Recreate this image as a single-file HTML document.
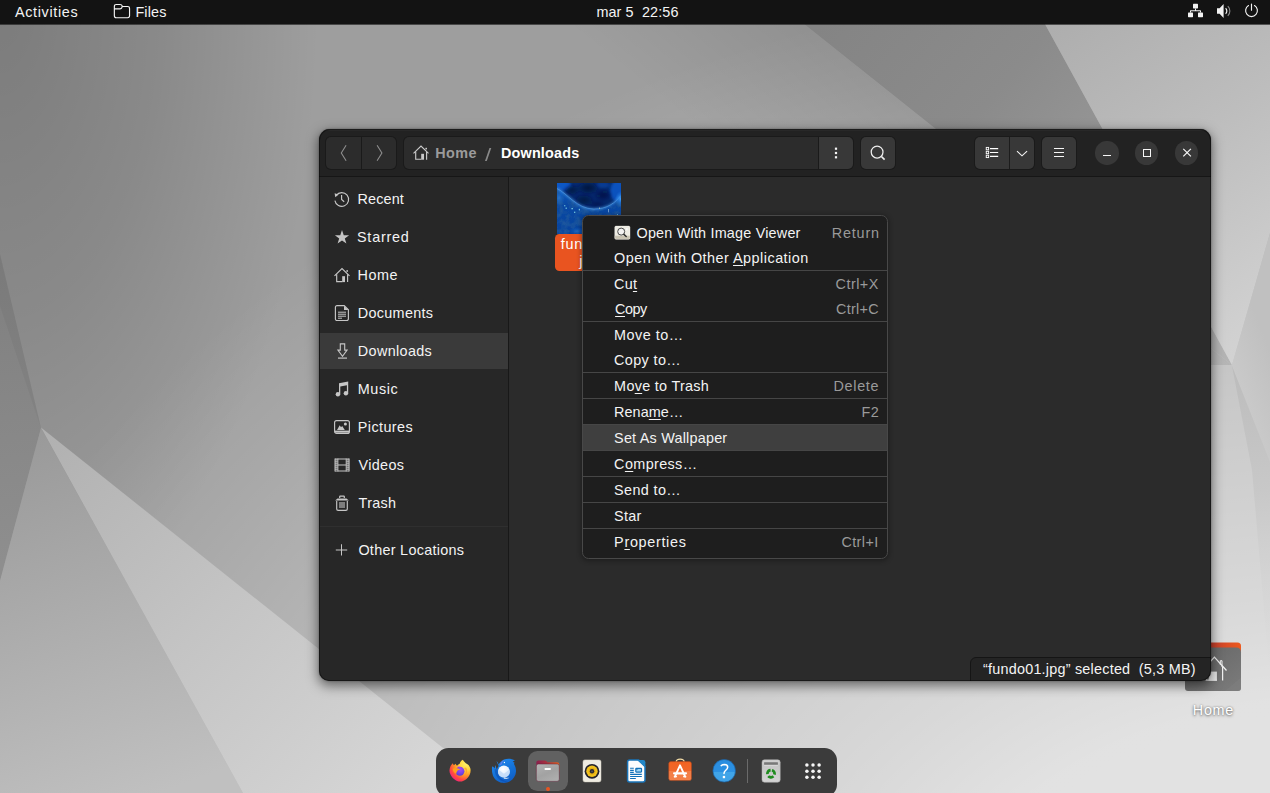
<!DOCTYPE html>
<html lang="en">
<head>
<meta charset="utf-8">
<title>Files - Downloads</title>
<style>
*{box-sizing:border-box;margin:0;padding:0}
html,body{width:1270px;height:793px;overflow:hidden;background:#9a9a9a}
body{position:relative;font-family:"Liberation Sans","DejaVu Sans",sans-serif;font-size:14.4px;color:#f2f2f2;-webkit-font-smoothing:antialiased}
.abs{position:absolute}
svg{display:block;position:absolute;overflow:visible}
#wall{left:0;top:0;width:1270px;height:793px}
/* top bar */
#topbar{left:0;top:0;width:1270px;height:24px;background:#131313;box-shadow:0 1px 0 rgba(19,19,19,.62)}
.tb{position:absolute;top:0;height:24px;line-height:22px;white-space:nowrap;color:#f4f4f4;font-size:14.4px}
/* window */
#winshadow{left:319px;top:129px;width:892px;height:552px;border-radius:11px 11px 10px 10px;box-shadow:0 4px 12px 1px rgba(0,0,0,.5),0 0 2px 0 rgba(0,0,0,.35)}
#win{left:319px;top:129px;width:892px;height:552px;border-radius:11px 11px 10px 10px;overflow:hidden;background:#2b2b2b}
#header{left:0;top:0;width:892px;height:47px;background:#222222;box-shadow:inset 0 2px 0 -0.5px #2f2f2f}
#hline{left:0;top:47px;width:892px;height:1px;background:#161616}
.hbtn{position:absolute;top:7.7px;height:32.5px;background:#2c2c2c;box-shadow:0 0 0 1px #1a1a1a;border-radius:5px}
.hbtn.l{background:#383838}
.circ{position:absolute;width:23.4px;height:23.4px;border-radius:50%;background:#383838;top:12.4px}
#sidebar{left:0;top:48px;width:189px;height:504px;background:#272727}
#sideline{left:189px;top:48px;width:1px;height:504px;background:#181818}
.row{position:absolute;left:1px;width:188px;height:36px}
.row.sel{background:#3a3a3a}
.row span{position:absolute;left:38.4px;top:7px;line-height:22px;white-space:nowrap;color:#f3f3f3}
.row svg{left:14px;top:10px;width:16px;height:16px}
.mi{line-height:22px;white-space:nowrap;color:#f3f3f3}
.ms{line-height:22px;white-space:nowrap;color:#9a9a9a}
u{text-decoration:underline;text-decoration-thickness:1px;text-underline-offset:2px}
</style>
</head>
<body>
<svg id="wall" viewBox="0 0 1270 793" width="1270" height="793">
<defs>
<radialGradient id="gAL" gradientUnits="userSpaceOnUse" cx="1350" cy="1000" r="1480" gradientTransform="translate(1350 1000) scale(1 .7071) translate(-1350 -1000)">
<stop offset="0" stop-color="#fff" stop-opacity=".72"/><stop offset=".29" stop-color="#fff" stop-opacity=".70"/><stop offset=".39" stop-color="#fff" stop-opacity=".60"/><stop offset=".57" stop-color="#fff" stop-opacity=".45"/><stop offset=".69" stop-color="#fff" stop-opacity=".34"/><stop offset=".91" stop-color="#fff" stop-opacity=".09"/><stop offset="1" stop-color="#fff" stop-opacity="0"/>
</radialGradient>
<radialGradient id="gAD" gradientUnits="userSpaceOnUse" cx="0" cy="0" r="640" gradientTransform="scale(.5 1)">
<stop offset="0" stop-color="#000" stop-opacity=".22"/><stop offset=".5" stop-color="#000" stop-opacity=".13"/><stop offset="1" stop-color="#000" stop-opacity="0"/>
</radialGradient>
<linearGradient id="gEd" gradientUnits="userSpaceOnUse" x1="806.5" y1="217.8" x2="900" y2="100.5"><stop offset="0" stop-color="#000" stop-opacity="0"/><stop offset="1" stop-color="#000" stop-opacity=".085"/></linearGradient>
<linearGradient id="gDark" gradientUnits="userSpaceOnUse" x1="820" y1="24" x2="1200" y2="360">
<stop offset="0" stop-color="#848484"/><stop offset=".35" stop-color="#8b8b8b"/><stop offset=".8" stop-color="#a0a0a0"/><stop offset="1" stop-color="#b4b4b4"/>
</linearGradient>
<linearGradient id="gTR" gradientUnits="userSpaceOnUse" x1="1060" y1="24" x2="1270" y2="330">
<stop offset="0" stop-color="#aeaeae"/><stop offset=".45" stop-color="#bdbdbd"/><stop offset="1" stop-color="#d2d2d2"/>
</linearGradient>
<linearGradient id="gR" gradientUnits="userSpaceOnUse" x1="1232" y1="365" x2="1270" y2="350">
<stop offset="0" stop-color="#c9c9c9"/><stop offset="1" stop-color="#c0c0c0"/>
</linearGradient>
<linearGradient id="gRB" gradientUnits="userSpaceOnUse" x1="1240" y1="366" x2="1262" y2="680">
<stop offset="0" stop-color="#bcbcbc"/><stop offset=".4" stop-color="#c8c8c8"/><stop offset="1" stop-color="#dcdcdc" stop-opacity="0"/></linearGradient>
<linearGradient id="gLW" gradientUnits="userSpaceOnUse" x1="0" y1="254" x2="30" y2="560">
<stop offset="0" stop-color="#7f7f7f"/><stop offset="1" stop-color="#8e8e8e"/>
</linearGradient>
<linearGradient id="gC" gradientUnits="userSpaceOnUse" x1="30" y1="440" x2="160" y2="793">
<stop offset="0" stop-color="#9a9a9a"/><stop offset=".5" stop-color="#adadad"/><stop offset="1" stop-color="#c0c0c0"/>
</linearGradient>
<linearGradient id="gB" gradientUnits="userSpaceOnUse" x1="41" y1="428" x2="400" y2="793">
<stop offset="0" stop-color="#b0b0b0"/><stop offset=".5" stop-color="#c4c4c4"/><stop offset="1" stop-color="#d6d6d6"/>
</linearGradient>
</defs>
<rect x="0" y="0" width="1270" height="793" fill="#9e9e9e"/><rect x="0" y="0" width="1270" height="793" fill="url(#gAL)"/><rect x="0" y="0" width="1270" height="793" fill="url(#gAD)"/>
<polygon points="560,24 804,24 1232,365 988,365" fill="url(#gEd)"/><polygon points="804,24 1045,24 1232,365" fill="url(#gDark)"/>
<polygon points="1045,24 1270,24 1270,233 1232,365" fill="url(#gTR)"/>
<polygon points="1270,233 1232,365 1270,473" fill="url(#gR)"/>
<polygon points="1232,366 1270,462 1270,680 1252,470" fill="url(#gRB)"/>
<polygon points="0,254 41,428 0,581" fill="url(#gLW)"/><polygon points="0,254 41,428 0,306" fill="#000" fill-opacity=".035"/>
<polygon points="0,581 41,428 243,793 0,793" fill="url(#gC)"/>
<polygon points="41,427.5 499.5,793 243,793" fill="url(#gB)"/>
</svg>

<!-- desktop home folder -->
<svg id="deskicon" style="left:1185px;top:642px;width:57px;height:51px" viewBox="0.000 -0.500 57.000 51.000">
<defs>
<linearGradient id="dh1" x1="0" y1="0" x2="1" y2="0"><stop offset="0" stop-color="#8e2a3c"/><stop offset=".5" stop-color="#c8412c"/><stop offset="1" stop-color="#ee5a1e"/></linearGradient>
<linearGradient id="dh2" x1="0" y1="0" x2="1" y2="1"><stop offset="0" stop-color="#636363"/><stop offset=".6" stop-color="#727272"/><stop offset="1" stop-color="#7c7c7c"/></linearGradient>
</defs>
<path d="M0 3.500Q0 0 3.500 0H52.500Q56 0 56 3.500V12H0z" fill="url(#dh1)"/>
<path d="M0 6.500Q0 5 1.500 5H51Q56 5 56 10V45.500Q56 48.500 53 48.500H3Q0 48.500 0 45.500z" fill="url(#dh2)"/>
<path d="M56 35V45.500Q56 48.500 53 48.500H40z" fill="#808080" opacity=".55"/>
<g fill="none" stroke="#f2f2f2" stroke-width="1.250"><path d="M17.300 28 29.400 14.600 41.500 28"/><path d="M37.600 24v14"/><path d="M37 24.500v-6.300h-1.700v4.200" stroke-width="1"/><path d="M21.200 24v13.600h10.700"/></g>
<rect x="23.700" y="29.100" width="8.200" height="9" fill="#ececec"/>
</svg>
<span class="abs" id="dlabel" style="line-height:22px;left:1192.80px;top:699px;font-size:14.4px;color:#fff;white-space:nowrap;text-shadow:0 1px 3px rgba(0,0,0,.5),0 0 2px rgba(0,0,0,.35);letter-spacing:0.700px">Home</span>
<div id="topbar" class="abs">
<span class="tb" id="t_act" style="left:15.00px;letter-spacing:0.644px;margin-top:1.01px">Activities</span>
<svg style="left:113px;top:3px;width:19px;height:17px" viewBox="-0.300 -0.400 19.000 17.000"><path d="M1.050 3Q1.050 1.050 3 1.050H6.800Q8.500 1.050 8.750 2.300L8.900 3.100H14.300Q16.250 3.100 16.250 5V12.400Q16.250 14.300 14.300 14.300H3Q1.050 14.300 1.050 12.400ZM1.050 5.500H6.500Q8.500 5.500 8.900 3.100" fill="none" stroke="#f4f4f4" stroke-width="1.150" stroke-linejoin="round"/></svg>
<span class="tb" id="t_files" style="left:135.40px;letter-spacing:0.150px;margin-top:1.01px">Files</span>
<span class="tb" id="t_clock" style="left:596.40px;letter-spacing:0.110px;margin-top:1.01px">mar 5&nbsp;&nbsp;22:56</span>
<!-- network -->
<svg style="left:1187px;top:3px;width:18px;height:16px" viewBox="0.000 0.000 18.000 16.000" fill="#f2f2f2"><rect x="6" y="0.8" width="5" height="4.6" rx=".6"/><rect x="1" y="9.6" width="5" height="4.6" rx=".6"/><rect x="11" y="9.6" width="5" height="4.6" rx=".6"/><path d="M8 5.4h1v1.9h4.5a.5.5 0 0 1 .5.5v1.8h-1V8.3H4v1.3H3V7.8a.5.5 0 0 1 .5-.5H8z"/></svg>
<!-- volume -->
<svg style="left:1216px;top:3px;width:17px;height:17px" viewBox="0.000 0.000 17.000 17.000"><path d="M1 5.3h2.6L7.6 1v14L3.6 10.7H1z" fill="#f2f2f2"/><path d="M9.6 5.3a3.6 3.6 0 0 1 0 5.4" fill="none" stroke="#f2f2f2" stroke-width="1.2"/><path d="M11.8 3.2a6.6 6.6 0 0 1 0 9.6" fill="none" stroke="#8c8c8c" stroke-width="1.1"/></svg>
<!-- power -->
<svg style="left:1244px;top:3px;width:16px;height:16px" viewBox="0.000 0.000 16.000 16.000" fill="none" stroke="#f2f2f2" stroke-width="1.15" stroke-linecap="round"><path d="M7.5 1v6.2"/><path d="M4.5 2.6a5.9 5.9 0 1 0 6 0"/></svg>
</div>

<div id="winshadow" class="abs"></div>
<div id="win" class="abs">
<div id="header" class="abs"></div>
<div id="hline" class="abs"></div>
<!-- nav buttons -->
<div class="hbtn" style="left:7.4px;width:69.8px"></div>
<div class="abs" style="left:42px;top:7.7px;width:1px;height:32.5px;background:#1a1a1a"></div>
<svg style="left:17px;top:15px;width:17px;height:19px" viewBox="0.000 0.000 17.000 19.000"><path d="M10.1 1.3 5.3 9l4.8 7.7" fill="none" stroke="#8e8e8e" stroke-width="1.1"/></svg>
<svg style="left:52px;top:15px;width:18px;height:19px" viewBox="-0.800 0.000 18.000 19.000"><path d="M5.3 1.3 10.1 9l-4.8 7.7" fill="none" stroke="#8e8e8e" stroke-width="1.1"/></svg>
<!-- path bar -->
<div class="hbtn" style="left:84.7px;width:414.4px;border-radius:5px 0 0 5px"></div>
<div class="hbtn l" style="left:500px;width:34.2px;border-radius:0 5px 5px 0"></div>
<svg style="left:94px;top:15px;width:17px;height:18px" viewBox="0.000 -0.600 17.000 18.000" fill="none" stroke="#c9c9c9" stroke-width="1.150"><path d="M.5 8.800 8 1.500l7.500 7.300"/><path d="M2.700 7.200v7.400h5.600"/><path d="M13.600 7.200v7.900"/><rect x="8.200" y="9.200" width="2.800" height="5.900" fill="#c9c9c9" stroke="none"/><rect x="12.400" y="3.200" width="1.600" height="1.600" fill="#c9c9c9" stroke="none"/></svg>
<span class="abs b" id="p_home" style="left:116.30px;top:13.01px;line-height:22px;color:#9b9b9b;font-weight:bold;white-space:nowrap;letter-spacing:0.4px">Home</span>
<span class="abs" id="p_slash" style="left:166.2px;top:15px;line-height:22px;color:#8a8a8a;white-space:nowrap;font-size:19px;transform:scaleX(1.18);transform-origin:0 0">/</span>
<span class="abs b" id="p_dl" style="left:182.00px;top:13.01px;line-height:22px;color:#ffffff;font-weight:bold;white-space:nowrap;letter-spacing:0.173px">Downloads</span>
<svg style="left:514px;top:17px;width:7px;height:15px" viewBox="0.000 0.000 7.000 15.000" fill="#f4f4f4"><rect x="1.9" y="1.6" width="2.2" height="2.2"/><rect x="1.9" y="5.9" width="2.2" height="2.2"/><rect x="1.9" y="10.2" width="2.2" height="2.2"/></svg>
<!-- search -->
<div class="hbtn l" style="left:541.9px;width:34.2px"></div>
<svg style="left:549px;top:14px;width:21px;height:21px" viewBox="0.000 0.000 21.000 21.000" fill="none" stroke="#eeeeee"><circle cx="9.1" cy="9.1" r="5.9" stroke-width="1.25"/><path d="M13.4 13.5 16.6 16.6" stroke-width="1.7"/></svg>
<!-- view buttons -->
<div class="hbtn l" style="left:655.8px;width:59.3px"></div>
<div class="abs" style="left:690px;top:7.7px;width:1px;height:32.5px;background:#1c1c1c"></div>
<svg style="left:666px;top:17px;width:15px;height:14px" viewBox="0.000 0.000 15.000 14.000" fill="none" stroke="#ffffff"><rect x="1.25" y="1.4" width="2.4" height="2.4" stroke-width=".9"/><rect x="1.25" y="5.3" width="2.4" height="2.4" stroke-width=".9"/><rect x="1.25" y="9.2" width="2.4" height="2.4" stroke-width=".9"/><path d="M5 2.6h8.200M5 6.5h8.200M5 10.4h8.200" stroke-width="1.100"/></svg>
<svg style="left:696px;top:19px;width:15px;height:11px" viewBox="0.000 0.000 15.000 11.000"><path d="M2 3.100 7 7.800 12.100 3.100" fill="none" stroke="#f4f4f4" stroke-width="1.150"/></svg>
<div class="hbtn l" style="left:722.9px;width:34.4px"></div>
<div class="abs" style="left:734.7px;top:19px;width:10.4px;height:1px;background:#f6f6f6;box-shadow:0 4px 0 #f6f6f6,0 8px 0 #f6f6f6"></div>
<!-- window controls -->
<div class="circ" style="left:776.3px"></div>
<div class="circ" style="left:816px"></div>
<div class="circ" style="left:856.1px"></div>
<div class="abs" style="left:783.9px;top:26px;width:8.2px;height:1.1px;background:#f6f6f6"></div>
<div class="abs" style="left:823.6px;top:19.7px;width:8.5px;height:8.3px;border:1.2px solid #f6f6f6"></div>
<svg style="left:863px;top:19px;width:11px;height:11px" viewBox="-0.600 -0.100 11.000 11.000"><path d="M.7.7l7.6 7.6M8.3.7.7 8.3" stroke="#f6f6f6" stroke-width="1.2"/></svg>
<div id="sidebar" class="abs"></div>
<div id="sideline" class="abs"></div>
<div class="row" style="top:52px"><svg viewBox="0 0 16 16" fill="none" stroke="#c6c6c6" stroke-width="1.15"><path d="M2.2 4.3A6.9 6.9 0 1 1 .9 9.6"/><path d="M.6 2.3 4.6 3.6 1.3 6.3z" fill="#c6c6c6" stroke="none"/><path d="M7.6 4v4.5l2.6 2.2"/></svg><span id="s1" style="letter-spacing:0.120px;margin-left:-0.80px;margin-top:0.00px">Recent</span></div>
<div class="row" style="top:90px"><svg viewBox="0 0 16 16"><path d="M8 1.1 9.75 6.2 15.1 6.3 10.8 9.5 12.4 14.6 8 11.5 3.6 14.6 5.2 9.5 .9 6.3 6.25 6.2z" fill="#c4c4c4"/></svg><span id="s2" style="letter-spacing:0.767px;margin-left:-1.40px;margin-top:0.01px">Starred</span></div>
<div class="row" style="top:128px"><svg viewBox="0 0 16 16" fill="none" stroke="#c6c6c6" stroke-width="1.15"><path d="M.5 8.8 8 1.5l7.5 7.3"/><path d="M2.7 7.2v7.4h5.6"/><path d="M13.6 7.2v7.9"/><rect x="8.2" y="9.2" width="2.8" height="5.9" fill="#c6c6c6" stroke="none"/><rect x="12.4" y="3.2" width="1.6" height="1.6" fill="#c6c6c6" stroke="none"/></svg><span id="s3" style="letter-spacing:0.533px;margin-left:-0.80px;margin-top:0.00px">Home</span></div>
<div class="row" style="top:166px"><svg viewBox="0 0 16 16" fill="none" stroke="#c6c6c6" stroke-width="1.15"><path d="M3 .6h7.2l4.2 4.2v9.1a1.6 1.6 0 0 1-1.6 1.6H3a1.6 1.6 0 0 1-1.6-1.6V2.2A1.6 1.6 0 0 1 3 .6z"/><path d="M10 .8v4.3h4.3z" fill="#c6c6c6" stroke="none"/><path d="M4 7.2h8M4 9.2h8M4 11.2h8M4 13.2h4" stroke-width="1"/></svg><span id="s4" style="letter-spacing:0.300px;margin-left:-0.60px;margin-top:0.00px">Documents</span></div>
<div class="row sel" style="top:204px"><svg viewBox="0 0 16 16" fill="none" stroke="#c6c6c6" stroke-width="1.1"><path d="M6.3.9h4.4v6.2h2.4L8.5 13.4 3.9 7.1h2.4z"/><path d="M4 15.1h9" stroke-width="1.2"/></svg><span id="s5" style="letter-spacing:0.348px;margin-left:-0.60px;margin-top:0.01px">Downloads</span></div>
<div class="row" style="top:242px"><svg viewBox="0 0 16 16" fill="#c6c6c6"><path d="M5 2.2 14.2.5v11.9h-1.3V4.2L6.3 5.5v8H5z"/><circle cx="3.9" cy="13.3" r="2.2"/><circle cx="11.9" cy="12.3" r="2.2"/></svg><span id="s6" style="letter-spacing:0.550px;margin-left:-0.60px;margin-top:0.00px">Music</span></div>
<div class="row" style="top:280px"><svg viewBox="0 0 16 16" fill="none" stroke="#c6c6c6" stroke-width="1.15"><rect x=".6" y="1.6" width="14.8" height="12.8" rx="2"/><path d="M1 12.6h14" stroke-width="2"/><path d="M3 11 5.7 6.2 7 8.3 8.2 7 10.8 11z" fill="#c6c6c6" stroke="none"/><circle cx="11.4" cy="5" r="1.5" fill="#c6c6c6" stroke="none"/></svg><span id="s7" style="letter-spacing:0.400px;margin-left:-0.60px;margin-top:0.00px">Pictures</span></div>
<div class="row" style="top:318px"><svg viewBox="0 0 16 16" fill="none" stroke="#c6c6c6"><path d="M2.4 1.5v13M13.7 1.5v13" stroke-width="2.8" stroke-dasharray="1.2 .8" stroke="#c6c6c6"/><path d="M1 1.5v13M15.1 1.5v13" stroke-width="1"/><path d="M3.8 2h8.5M3.8 8h8.5M3.8 14h8.5" stroke-width="1.15"/><path d="M3.9 1.5v13M12.2 1.5v13" stroke-width=".9"/></svg><span id="s8" style="letter-spacing:0.320px;margin-left:0.20px;margin-top:0.01px">Videos</span></div>
<div class="row" style="top:356px"><svg viewBox="0 0 16 16" fill="none" stroke="#c6c6c6" stroke-width="1.15"><path d="M5.7 3V1.6a.5.5 0 0 1 .5-.5h3.6a.5.5 0 0 1 .5.5V3" stroke-width="1.2"/><path d="M1.2 5.6 3.5 3.4h9l2.3 2.2z" fill="#c6c6c6" stroke="none"/><path d="M2.7 6v8a1.4 1.4 0 0 0 1.4 1.4h7.8A1.4 1.4 0 0 0 13.300 14V6"/><path d="M6 7v6M8 7v6M10 7v6" stroke-width="1.1"/></svg><span id="s9" style="letter-spacing:0.300px;margin-left:0.20px;margin-top:0.00px">Trash</span></div>
<div class="abs" style="left:1px;top:396.5px;width:188px;height:1px;background:#2f2f2f"></div>
<div class="row" style="top:403px"><svg viewBox="0 0 16 16" stroke="#c6c6c6" stroke-width="1.05"><path d="M7.500 2.200v11.400M1.800 7.900h11.400"/></svg><span id="s10" style="letter-spacing:0.285px;margin-left:0.00px;margin-top:0.01px">Other Locations</span></div>

<!-- thumbnail -->
<svg style="left:238px;top:54px;width:65px;height:52px" viewBox="0 0 65 52">
<defs>
<linearGradient id="th1" x1="0" y1="0" x2="0" y2="1"><stop offset="0" stop-color="#042a70"/><stop offset=".5" stop-color="#04276a"/><stop offset="1" stop-color="#0a4aa6"/></linearGradient>
<radialGradient id="thd" cx=".5" cy=".5" r=".5"><stop offset="0" stop-color="#000a2c" stop-opacity=".8"/><stop offset=".5" stop-color="#01113c" stop-opacity=".55"/><stop offset="1" stop-color="#021548" stop-opacity="0"/></radialGradient>
<radialGradient id="thg" cx=".5" cy=".5" r=".5"><stop offset="0" stop-color="#4aa8ff" stop-opacity=".95"/><stop offset=".5" stop-color="#2a86ea" stop-opacity=".5"/><stop offset="1" stop-color="#2a86ea" stop-opacity="0"/></radialGradient>
<linearGradient id="th4" x1="0" y1="0" x2="0" y2="1"><stop offset="0" stop-color="#0f5cc0"/><stop offset=".35" stop-color="#0948a4"/><stop offset="1" stop-color="#08439c"/></linearGradient>
<filter id="thb" x="-30%" y="-30%" width="160%" height="160%"><feGaussianBlur stdDeviation="1.600"/></filter>
<filter id="thb2" x="-30%" y="-30%" width="160%" height="160%"><feGaussianBlur stdDeviation=".8"/></filter>
<filter id="thn" x="0" y="0" width="100%" height="100%"><feTurbulence type="fractalNoise" baseFrequency=".16" numOctaves="3" seed="7" result="n"/><feColorMatrix in="n" type="matrix" values="0 0 0 0 .01  0 0 0 0 .09  0 0 0 0 .34  0 0 0 3.200 -1.250"/><feComposite operator="in" in2="SourceGraphic"/></filter>
<clipPath id="thc"><rect width="64" height="51"/></clipPath>
</defs>
<g clip-path="url(#thc)">
<rect width="64" height="51" fill="url(#th1)"/>
<ellipse cx="3" cy="2" rx="11" ry="6" fill="#0b5cd0" opacity=".9" filter="url(#thb)"/>
<ellipse cx="61" cy="8" rx="8" ry="11" fill="#0a5acc" opacity=".85" filter="url(#thb)"/>
<ellipse cx="46" cy="2" rx="7" ry="3" fill="#0a50b8" opacity=".5" filter="url(#thb)"/>
<g filter="url(#thb2)"><ellipse cx="31" cy="5" rx="12" ry="7" fill="url(#thd)"/><ellipse cx="15" cy="7" rx="9" ry="6" fill="url(#thd)" opacity=".8"/><ellipse cx="46" cy="12" rx="10" ry="7" fill="url(#thd)" opacity=".7"/><ellipse cx="27" cy="17" rx="11" ry="7" fill="url(#thd)" opacity=".8"/><ellipse cx="40" cy="21" rx="9" ry="4.500" fill="url(#thd)" opacity=".5"/></g>
<path d="M0 5.500C10 10 20 26 37 26C50 26 58 20 64 12.500V51H0z" fill="url(#th4)"/>
<path d="M0 5.500C10 10 20 26 37 26C50 26 58 20 64 12.500V51H0z" fill="#021a58" filter="url(#thn)"/>
<path d="M0 5.500C10 10 20 26 37 26C50 26 58 20 64 12.500" fill="none" stroke="#4c9ff0" stroke-width="2" opacity=".6" filter="url(#thb2)"/>
<path d="M0 5.500C10 10 20 26 37 26C50 26 58 20 64 12.500" fill="none" stroke="#6ab4f8" stroke-width=".6" opacity=".75"/>
<ellipse cx="64" cy="16" rx="6" ry="8" fill="url(#thg)"/>
<ellipse cx="2" cy="15" rx="6" ry="8" fill="url(#thg)" opacity=".4"/>
<ellipse cx="20" cy="48" rx="8" ry="4" fill="url(#thg)" opacity=".35"/>
<g fill="#8fe6ee" opacity=".9"><rect x="7.200" y="22.200" width="1.100" height="1.100"/><rect x="8.600" y="24.600" width="1.200" height="1.200"/><rect x="14.500" y="25" width="1.300" height="1.300"/><rect x="21.800" y="25.800" width="1" height="1.600"/><rect x="17" y="28.700" width="1.300" height="1.100"/><rect x="42" y="24.600" width=".8" height="1.100" fill="#cfe8c8"/><rect x="51" y="26" width=".8" height="3.300" fill="#c6e4f4" opacity=".7"/><rect x="60" y="31" width=".8" height=".8"/></g>
</g>
</svg>
<div class="abs" style="left:236.300px;top:105px;width:70px;height:37px;background:#e95420;border-radius:4.500px"></div>
<span class="abs" id="f1" style="left:241.7px;top:106px;line-height:18px;white-space:nowrap;color:#fff;letter-spacing:0.75px">fundo01.</span>
<span class="abs" id="f2" style="left:260.2px;top:123px;line-height:18px;white-space:nowrap;color:#fff;letter-spacing:0.3px">jpg</span>
<!-- status bar -->
<div class="abs" style="left:651.300px;top:528.300px;width:245px;height:30px;background:#242424;border:1px solid #151515;border-radius:6px 0 0 0"></div>
<span class="abs" id="st" style="left:664.00px;top:529.01px;line-height:22px;white-space:nowrap;color:#f4f4f4;letter-spacing:0.225px">“fundo01.jpg” selected&nbsp;&nbsp;(5,3 MB)</span>

<div class="abs" style="left:0;top:0;width:892px;height:552px;border-radius:11px 11px 10px 10px;box-shadow:inset 0 0 0 1px rgba(0,0,0,.42);pointer-events:none"></div>
</div>

<div id="menu" class="abs" style="left:582px;top:215px;width:306px;height:344px;background:#1e1e1e;border:1px solid #484848;border-radius:6.5px;box-shadow:0 1px 5px 1px rgba(0,0,0,.32)"></div>
<div class="abs" style="left:583px;top:425px;width:304px;height:25px;background:#3f3f3f"></div>
<div class="abs" style="left:583px;top:270px;width:304px;height:1px;background:#464646"></div>
<div class="abs" style="left:583px;top:321px;width:304px;height:1px;background:#464646"></div>
<div class="abs" style="left:583px;top:372px;width:304px;height:1px;background:#464646"></div>
<div class="abs" style="left:583px;top:398px;width:304px;height:1px;background:#464646"></div>
<div class="abs" style="left:583px;top:424px;width:304px;height:1px;background:#464646"></div>
<div class="abs" style="left:583px;top:450px;width:304px;height:1px;background:#464646"></div>
<div class="abs" style="left:583px;top:476px;width:304px;height:1px;background:#464646"></div>
<div class="abs" style="left:583px;top:502px;width:304px;height:1px;background:#464646"></div>
<div class="abs" style="left:583px;top:528px;width:304px;height:1px;background:#464646"></div>
<span class="abs mi" id="m0" style="left:636.50px;top:222.01px;letter-spacing:0.200px">Open With Image Viewer</span>
<span class="abs ms" id="k0" style="right:390.20px;top:222.01px;letter-spacing:0.800px">Return</span>
<span class="abs mi" id="m1" style="left:614.10px;top:247.00px;letter-spacing:0.484px">Open With Other <u>A</u>pplication</span>
<span class="abs mi" id="m2" style="left:614.10px;top:273.01px;letter-spacing:0.200px">Cu<u>t</u></span>
<span class="abs ms" id="k2" style="right:391.20px;top:273.01px;letter-spacing:0.480px">Ctrl+X</span>
<span class="abs mi" id="m3" style="left:615.10px;top:298.00px;letter-spacing:-0.467px"><u>C</u>opy</span>
<span class="abs ms" id="k3" style="right:391.20px;top:298.00px;letter-spacing:0.280px">Ctrl+C</span>
<span class="abs mi" id="m4" style="left:614.10px;top:324.01px;letter-spacing:0.485px">Move to…</span>
<span class="abs mi" id="m5" style="left:614.10px;top:349.00px;letter-spacing:0.371px">Copy to…</span>
<span class="abs mi" id="m6" style="left:614.10px;top:375.01px;letter-spacing:0.299px">Mo<u>v</u>e to Trash</span>
<span class="abs ms" id="k6" style="right:390.80px;top:375.01px;letter-spacing:0.680px">Delete</span>
<span class="abs mi" id="m7" style="left:614.10px;top:401.01px;letter-spacing:0.067px">Rena<u>m</u>e…</span>
<span class="abs ms" id="k7" style="right:390.80px;top:401.01px;letter-spacing:0.400px">F2</span>
<span class="abs mi" id="m8" style="left:614.10px;top:427.01px;letter-spacing:0.213px">Set As Wallpaper</span>
<span class="abs mi" id="m9" style="left:614.10px;top:453.00px;letter-spacing:0.375px">C<u>o</u>mpress…</span>
<span class="abs mi" id="m10" style="left:614.10px;top:479.01px;letter-spacing:0.371px">Send to…</span>
<span class="abs mi" id="m11" style="left:614.10px;top:505.00px;letter-spacing:0.266px">Star</span>
<span class="abs mi" id="m12" style="left:614.10px;top:531.01px;letter-spacing:0.689px">P<u>r</u>operties</span>
<span class="abs ms" id="k12" style="right:391.40px;top:531.01px;letter-spacing:0.400px">Ctrl+I</span>
<svg style="left:614px;top:225px;width:17px;height:15px" viewBox="-0.2 -0.5 17 15"><defs><clipPath id="ivc"><rect x=".5" y=".6" width="15.300" height="13.200" rx="1.400"/></clipPath></defs><g clip-path="url(#ivc)"><rect x="0" y="0" width="17" height="15" fill="#eeece4"/><rect x="0" y="10.200" width="17" height="5" fill="#c9c3b2"/><rect x="11.600" y="2.600" width="2" height="2.200" fill="#fbfbf9"/></g><rect x=".5" y=".6" width="15.300" height="13.200" rx="1.400" fill="none" stroke="#fbfaf4" stroke-width=".5" opacity=".7"/><circle cx="7" cy="6.100" r="3.500" fill="#f4f4f4" fill-opacity=".8" stroke="#4a4a4a" stroke-width="1"/><path d="M9.700 8.900 12 11" stroke="#2e2e2e" stroke-width="1.500" stroke-linecap="round"/></svg>


<div id="dock" class="abs" style="left:436.300px;top:747.900px;width:400.300px;height:49px;background:#3b3b3b;border-radius:12.500px"></div>
<div class="abs" style="left:528px;top:751px;width:40px;height:40px;background:#616161;border-radius:9.500px"></div>
<div class="abs" style="left:746.900px;top:759px;width:1px;height:23.600px;background:#6a6a6a"></div>
<div class="abs" style="left:546px;top:787.100px;width:4px;height:4px;border-radius:50%;background:#e95420"></div>
<!-- firefox -->
<svg style="left:448px;top:758px;width:26px;height:26px" viewBox="-0.500 -0.500 26.000 26.000">
<defs><radialGradient id="ff1" cx=".78" cy=".18" r="1.050"><stop offset="0" stop-color="#fff36b"/><stop offset=".3" stop-color="#ffd23a"/><stop offset=".5" stop-color="#ff9a26"/><stop offset=".72" stop-color="#ff4a3e"/><stop offset=".88" stop-color="#f4227c"/><stop offset="1" stop-color="#d612a8"/></radialGradient>
<radialGradient id="ff2" cx=".55" cy=".3" r=".75"><stop offset="0" stop-color="#a44cf8"/><stop offset=".55" stop-color="#7a44e6"/><stop offset="1" stop-color="#4f3fd0"/></radialGradient></defs>
<path d="M14.400 1.300C15.400 3 16.400 4 17.300 4.800 18.500 5.700 19.600 6.200 20.300 6.800 20.400 7.300 20.700 7.600 21 8 21.800 9.300 22.200 10.600 22.100 12 22.100 13.500 21.800 15 21.200 16.300 20.500 17.900 19.400 19.300 18 20.400 16.200 21.900 14 23 11.700 23 9.500 23 7.500 22.100 5.800 20.700 4 19.400 2.700 17.900 2 16 1.300 14.500 .9 13.100 1 11.700 1.100 10.200 1.500 8.800 2.100 7.600 2.500 6.700 3.300 5.700 4.400 4.700 4.600 5.500 5 6.200 5.500 6.800 5.900 6.200 6.400 5.700 7.100 5.300 7.300 6 7.800 6.700 8.500 7.200 9.400 6.400 10.300 5.800 11.200 5.300 11.400 4.300 11.900 3.400 12.600 2.600 13.100 2.100 13.700 1.600 14.400 1.300z" fill="url(#ff1)"/>
<circle cx="11.400" cy="12.700" r="4.500" fill="url(#ff2)"/>
<path d="M4.200 10.200C5.800 9.300 8 9.300 9.600 10 10.600 10.400 11.400 10.800 11.800 11.300 10.700 11.300 9.600 11.600 8.800 12.400 8 13.300 7.700 14.300 7.900 15.300 5.600 14.400 4.200 12.400 4.200 10.200z" fill="#ff9f1c"/>
<path d="M8.500 7.200C10 7.600 12 8.500 13.500 9.500 12.800 9.300 12 9.200 11.200 9.300 10.400 8.500 9.400 7.700 8.500 7.200z" fill="#b53cf0" opacity=".7"/>
<path d="M15.500 9.500C17.500 11 18 14 16.500 16.500 18.800 15 19.500 11.500 17.500 9 17 9 16.200 9.200 15.500 9.500z" fill="#ff8a1f" opacity=".55"/>
</svg>
<!-- thunderbird -->
<svg style="left:491px;top:758px;width:27px;height:27px" viewBox="-0.500 -0.500 27.000 27.000">
<defs><linearGradient id="tb1" x1=".2" y1="0" x2=".7" y2="1"><stop offset="0" stop-color="#1f8af0"/><stop offset=".5" stop-color="#1574da"/><stop offset="1" stop-color="#0f5cc4"/></linearGradient>
<radialGradient id="tb2" cx=".42" cy=".3" r=".75"><stop offset="0" stop-color="#ffffff"/><stop offset=".6" stop-color="#e4f1ff"/><stop offset="1" stop-color="#b4d6fa"/></radialGradient></defs>
<path d="M5 2.600C5.800 4.500 6.800 6.400 7.100 7.600 6.300 8.600 5.700 9.800 5.400 11 4.600 9.800 4.300 8 4.400 6.500 3.600 7.600 3.200 8.800 3.100 10 2 8.500 1.300 7.500.5 8.500.3 11 .4 14 1.400 17 2.800 20.500 6 23.500 10.500 24.300 13 24.700 16 24.300 18.500 22.800 22 20.700 24.300 17 24.500 13 24.600 10.500 24 8 22.700 6 22.500 5.200 22.600 4.500 23 3.800 22.300 3.700 21.700 3.500 21.200 3.200 21.800 2.700 22.600 2.300 23.500 2 21.500 .9 19.200 .3 17 .3 13.800 .3 11 1.500 9 3.500 8.300 4.200 7.700 5 7.200 5.900 6.700 4.700 6 3.500 5 2.600z" fill="url(#tb1)"/>
<path d="M8.600 6.300C9.200 4.300 10.800 2.500 12.800 1.600 11.300 3 10.200 4.800 9.600 6.800z" fill="#8a7ae8" opacity=".85"/>
<circle cx="12.400" cy="13" r="5.900" fill="url(#tb2)"/>
<path d="M7 11.200 12.400 15.200 17.800 11.200C18.200 12.200 18.400 13.300 18.200 14.400 17.600 17.200 15.200 19 12.400 19 9.600 19 7.200 17.200 6.600 14.400 6.400 13.300 6.600 12.200 7 11.200z" fill="#c4dcf8" opacity=".85"/>
<path d="M3.200 10.500C3 14 4.500 18.500 8.500 21.500 10.500 23 13.500 23.600 16 23 12 22.300 8.500 20 7 16.500 6 14 5.800 12 6.200 10.200 5.500 11 4.200 11.200 3.200 10.500z" fill="#0a44a8" opacity=".5"/>
<path d="M12 20 C14 21 16.500 20.500 18 19 C16.500 19.500 14.500 19.500 13 18.800z" fill="#fff" opacity=".7"/>
<circle cx="12.900" cy="4" r=".65" fill="#fff"/>
</svg>
<!-- files -->
<svg style="left:535px;top:759px;width:27px;height:25px" viewBox="-0.300 -0.500 27.000 25.000">
<defs><linearGradient id="fl1" x1="0" y1="0" x2="1" y2="0"><stop offset="0" stop-color="#8a1f4e"/><stop offset=".45" stop-color="#a8323e"/><stop offset="1" stop-color="#e8601e"/></linearGradient>
<linearGradient id="fl2" x1="0" y1="0" x2=".6" y2="1"><stop offset="0" stop-color="#b4b4b4"/><stop offset=".6" stop-color="#a2a2a2"/><stop offset="1" stop-color="#adadad"/></linearGradient></defs>
<path d="M1 3.100Q1 .900 3.200 .900H9.300Q10.300 .900 11 1.600L12.100 2.700H21.800Q24 2.700 24 4.900V12H1z" fill="url(#fl1)"/>
<path d="M1 6.500Q1 4.500 3 4.500H22Q24 4.500 24 6.500V19.700Q24 21.900 21.800 21.900H3.200Q1 21.900 1 19.700z" fill="url(#fl2)" stroke="#5a2236" stroke-width=".5"/>
<rect x="9.300" y="8.400" width="6.200" height="2.100" rx=".4" fill="#fcfcfc"/>
</svg>
<!-- rhythmbox -->
<svg style="left:582px;top:759px;width:21px;height:25px" viewBox="-0.700 -0.600 21.000 25.000">
<rect x=".3" y=".3" width="18" height="22" rx="1.800" fill="#efece2" stroke="#d6d2c4" stroke-width=".5"/>
<circle cx="9.300" cy="11.700" r="7.400" fill="#24222c"/><circle cx="9.300" cy="11.700" r="5.700" fill="#f2c21c"/><circle cx="9.300" cy="11.700" r="3.500" fill="#e6ae10"/><circle cx="9.300" cy="11.700" r="2.200" fill="#2a2830"/><circle cx="9.300" cy="11.700" r=".9" fill="#55535c"/>
</svg>
<!-- writer -->
<svg style="left:626px;top:759px;width:21px;height:25px" viewBox="-0.600 -0.300 21.000 25.000">
<path d="M3 .8H12L18.400 7.200V20.600Q18.400 22.600 16.400 22.600H3Q1 22.600 1 20.600V2.800Q1 .8 3 .8z" fill="#fdfdfd" stroke="#1a74b8" stroke-width="1.500"/>
<path d="M10.600 .6H16.400Q18.800 .6 18.800 3V8.200z" fill="#2287c8"/>
<g stroke="#1070b8" stroke-width="1.150"><path d="M3.500 9H7.200M3.500 11.050H7.200M3.500 13.100H7.200M3.500 15.150H15.200M3.500 17.200H15.200M3.500 19.250H9.200"/></g>
<rect x="8.600" y="8.500" width="6.900" height="4.900" rx="1.100" fill="#1070b8"/><path d="M9.800 12.200v-2h1.200l.6-.5h2.700v2.500z" fill="#9fd6f4"/>
</svg>
<!-- software -->
<svg style="left:668px;top:758px;width:25px;height:25px" viewBox="0.000 -0.300 25.000 25.000">
<defs><linearGradient id="sw1" x1="0" y1="0" x2="0" y2="1"><stop offset="0" stop-color="#f26322"/><stop offset=".47" stop-color="#f0672a"/><stop offset=".48" stop-color="#f37c44"/><stop offset="1" stop-color="#f4824a"/></linearGradient></defs>
<path d="M8.100 3.800Q8.100 .800 12.150 .800T16.200 3.800" fill="none" stroke="#f3dca6" stroke-width="1.100"/>
<rect x=".7" y="3.300" width="22.800" height="19" rx="2.200" fill="url(#sw1)" stroke="#a8431a" stroke-width=".5"/>
<path d="M6.900 18.400 12 7 17.200 18.400" fill="none" stroke="#fff" stroke-width="1.900" stroke-linejoin="round" stroke-linecap="round"/>
<rect x="5" y="14" width="14.100" height="2.100" rx="1.050" fill="#fff"/>
<path d="M6.300 18.400h2.200M15.600 18.400h2.200" stroke="#fff" stroke-width="1.200" stroke-linecap="round"/>
</svg>
<!-- help -->
<svg style="left:712px;top:759px;width:25px;height:25px" viewBox="-0.500 -0.100 25.000 25.000">
<defs><linearGradient id="hp1" x1="0" y1="0" x2="0" y2="1"><stop offset="0" stop-color="#2f93e4"/><stop offset=".08" stop-color="#2b8ee0"/><stop offset=".53" stop-color="#2b90e2"/><stop offset=".55" stop-color="#41a5e8"/><stop offset="1" stop-color="#3ea2e8"/></linearGradient></defs>
<circle cx="11.700" cy="11.700" r="11.300" fill="url(#hp1)" stroke="#1b5f9e" stroke-width=".7"/>
<path d="M8.700 6.500Q10 5.500 12 5.500Q15.300 5.700 15.200 8.200Q15.100 9.600 13.300 11.200Q11.500 12.800 11.500 14.300" fill="none" stroke="#fff" stroke-width="1.500" stroke-linecap="round"/><rect x="10.300" y="16.800" width="2.300" height="2.300" fill="#fff"/>
</svg>
<!-- trash -->
<svg style="left:761px;top:759px;width:21px;height:25px" viewBox="-0.700 -0.500 21.000 25.000">
<defs><linearGradient id="tr1" x1="0" y1="0" x2="0" y2="1"><stop offset="0" stop-color="#d2d2d2"/><stop offset=".25" stop-color="#c6c6c6"/><stop offset="1" stop-color="#d4d4d4"/></linearGradient></defs>
<rect x=".3" y=".3" width="18.200" height="22.400" rx="2.400" fill="url(#tr1)" stroke="#b2b2b2" stroke-width=".5"/>
<rect x="2.400" y="2.700" width="13.800" height="2.600" rx=".3" fill="#787878"/>
<path d="M2.400 6.100h13.800" stroke="#e2e2e2" stroke-width=".6"/>
<circle cx="9.300" cy="14.200" r="3.600" fill="none" stroke="#1f8c1f" stroke-width="2.700" stroke-dasharray="5.600 1.940" transform="rotate(-75 9.300 14.200)"/>
</svg>
<!-- grid -->
<svg style="left:803px;top:762px;width:21px;height:20px" viewBox="-0.900 -0.100 21.000 20.000" fill="#f7f7f7"><circle cx="3" cy="3" r="1.750"/><circle cx="9.100" cy="3" r="1.750"/><circle cx="15.200" cy="3" r="1.750"/><circle cx="3" cy="9.100" r="1.750"/><circle cx="9.100" cy="9.100" r="1.750"/><circle cx="15.200" cy="9.100" r="1.750"/><circle cx="3" cy="15.200" r="1.750"/><circle cx="9.100" cy="15.200" r="1.750"/><circle cx="15.200" cy="15.200" r="1.750"/></svg>

</body>
</html>
